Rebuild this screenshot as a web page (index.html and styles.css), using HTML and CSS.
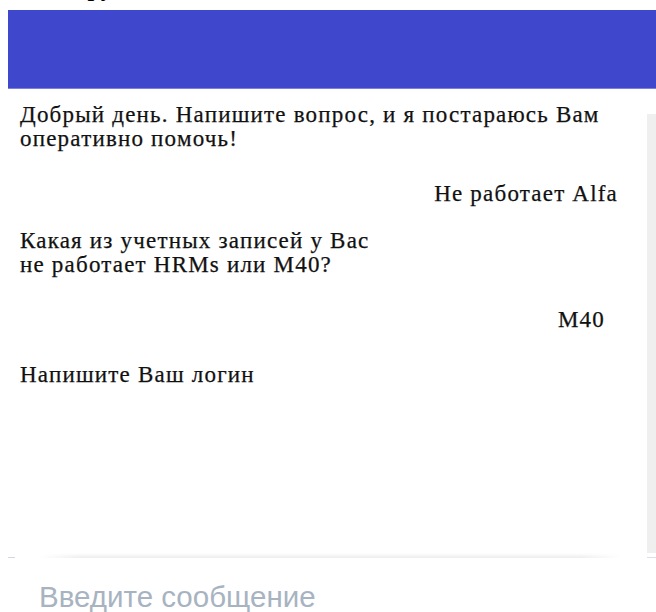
FILE: index.html
```html
<!DOCTYPE html>
<html lang="ru">
<head>
<meta charset="utf-8">
<title>Чат поддержки</title>
<link rel="stylesheet" href="styles.css">
</head>
<body>
  <p class="doc-title">всем сотрудникам и пользователям.</p>

  <section class="chat">
    <header class="chat-header"></header>

    <div class="chat-body">
      <div class="messages">
        <div class="msg bot">Добрый день. Напишите вопрос, и я постараюсь Вам<br>оперативно помочь!</div>
        <div class="msg user">Не работает Alfa</div>
        <div class="msg bot tight">Какая из учетных записей у Вас<br>не работает HRMs или М40?</div>
        <div class="msg user inset">М40</div>
        <div class="msg bot">Напишите Ваш логин</div>
      </div>
      <div class="scroll-track"></div>
    </div>

    <div class="divider">
      <span class="divider-edge"></span>
      <span class="divider-shade"></span>
      <span class="divider-edge wide"></span>
    </div>

    <div class="composer">
      <div class="composer-field">Введите сообщение</div>
    </div>
  </section>
</body>
</html>
```

FILE: styles.css
```css
html, body {
  margin: 0;
  padding: 0;
  height: 100%;
  overflow: hidden;
  background: #ffffff;
}

body {
  font-family: "Liberation Serif", "Times New Roman", serif;
  color: #000;
}

/* last line of the document text above the widget, cut by the top edge */
.doc-title {
  margin: -24px 0 0 -4px;
  height: 28px;
  font-size: 24px;
  line-height: 24px;
  font-weight: bold;
  white-space: nowrap;
  overflow: hidden;
}

.chat {
  margin: 6px 0 0 8px;
}

.chat-header {
  height: 78px;
  background: #3f48cc;
  border-bottom: 1px solid #7a81dc;
}

.chat-body {
  display: flex;
  height: 464px;
}

.messages {
  flex: 1;
  display: flex;
  flex-direction: column;
  padding: 14px 0 0 12px;
  font-size: 23px;
  line-height: 24px;
  letter-spacing: 1.2px;
  color: #111;
  -webkit-text-stroke: 0.25px #111;
}

.msg + .msg {
  margin-top: 31px;
}

.msg + .msg.tight {
  margin-top: 23px;
}

.msg.user {
  align-self: flex-end;
  padding-right: 29px;
}

.msg.user.inset {
  padding-right: 42px;
}

.scroll-track {
  width: 9px;
  margin-top: 25px;
  height: 439px;
  background: #efefef;
}

.divider {
  display: flex;
  align-items: flex-end;
  height: 5px;
}

.divider-edge {
  width: 7px;
  height: 1px;
  background: #d0d8e2;
}

.divider-edge.wide {
  width: 9px;
  background: #d8dfe8;
}

.divider-shade {
  flex: 1;
  height: 5px;
  margin: 0 26px 0 25px;
  background: linear-gradient(to bottom, rgba(0, 0, 0, 0), rgba(0, 0, 0, 0.07));
  -webkit-mask-image: linear-gradient(to right, transparent, #000 40px, #000 calc(100% - 40px), transparent);
  mask-image: linear-gradient(to right, transparent, #000 40px, #000 calc(100% - 40px), transparent);
}

.composer {
  padding: 22px 0 0 31px;
}

.composer-field {
  font-family: "Liberation Sans", Arial, sans-serif;
  font-size: 29.5px;
  color: #a8b3c1;
  white-space: nowrap;
}
```
